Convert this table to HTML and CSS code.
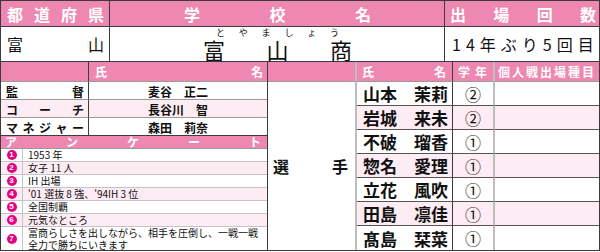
FILE: index.html
```html
<!DOCTYPE html>
<html lang="ja">
<head>
<meta charset="utf-8">
<link rel="stylesheet" href="styles.css">
</head>
<body>
<div class="sheet">
  <div class="top">
    <div class="hd jst big pref-h"><span>都</span><span>道</span><span>府</span><span>県</span></div>
    <div class="hd jst big school-h"><span>学</span><span>校</span><span>名</span></div>
    <div class="hd jst big count-h"><span>出</span><span>場</span><span>回</span><span>数</span></div>
    <div class="jst pref"><span>富</span><span>山</span></div>
    <div class="school">
      <div class="ruby jst"><span>と</span><span>や</span><span>ま</span><span>し</span><span>ょ</span><span>う</span></div>
      <div class="sname jst"><span>富</span><span>山</span><span>商</span></div>
    </div>
    <div class="count">14年ぶり5回目</div>
  </div>
  <div class="lower">
    <div class="left">
      <div class="staff">
        <div class="hd"></div>
        <div class="hd jst sh-name"><span>氏</span><span>名</span></div>
        <div class="jst role"><span>監</span><span>督</span></div>
        <div class="person">麦谷　正二</div>
        <div class="jst role alt"><span>コ</span><span>ー</span><span>チ</span></div>
        <div class="person alt">長谷川　智</div>
        <div class="jst role last"><span>マ</span><span>ネ</span><span>ジ</span><span>ャ</span><span>ー</span></div>
        <div class="person last">森田　莉奈</div>
      </div>
      <div class="hd jst survey-h"><span>ア</span><span>ン</span><span>ケ</span><span>ー</span><span>ト</span></div>
      <div class="survey">
        <div class="num"><span class="dot">1</span></div><div class="ans">1953 年</div>
        <div class="num alt"><span class="dot">2</span></div><div class="ans alt">女子 11 人</div>
        <div class="num"><span class="dot">3</span></div><div class="ans">IH 出場</div>
        <div class="num alt"><span class="dot">4</span></div><div class="ans alt">'01 選抜 8 強、'94IH 3 位</div>
        <div class="num"><span class="dot">5</span></div><div class="ans">全国制覇</div>
        <div class="num alt"><span class="dot">6</span></div><div class="ans alt">元気なところ</div>
        <div class="num end"><span class="dot">7</span></div><div class="ans end two">富商らしさを出しながら、相手を圧倒し、一戦一戦<br>全力で勝ちにいきます</div>
      </div>
    </div>
    <div class="players">
      <div class="hd ph c1"></div>
      <div class="hd ph c2 jst pn-h"><span>氏</span><span>名</span></div>
      <div class="hd ph c3 jst gr-h"><span>学</span><span>年</span></div>
      <div class="hd ph c4 jst ev-h"><span>個</span><span>人</span><span>戦</span><span>出</span><span>場</span><span>種</span><span>目</span></div>
      <div class="c1 jst senshu"><span>選</span><span>手</span></div>
      <div class="c2 pname">山本　茉莉</div><div class="c3 grade">②</div><div class="c4"></div>
      <div class="c2 pname alt">岩城　来未</div><div class="c3 grade alt">②</div><div class="c4 alt"></div>
      <div class="c2 pname">不破　瑠香</div><div class="c3 grade">①</div><div class="c4"></div>
      <div class="c2 pname alt">惣名　愛理</div><div class="c3 grade alt">①</div><div class="c4 alt"></div>
      <div class="c2 pname">立花　風吹</div><div class="c3 grade">①</div><div class="c4"></div>
      <div class="c2 pname alt">田島　凛佳</div><div class="c3 grade alt">①</div><div class="c4 alt"></div>
      <div class="c2 pname end">髙島　栞菜</div><div class="c3 grade end">①</div><div class="c4 end"></div>
    </div>
  </div>
</div>
</body>
</html>
```
FILE: styles.css
```css
* { box-sizing: border-box; margin: 0; padding: 0; }
body {
  margin: 0;
  background: #fff;
  font-family: "Noto Sans CJK JP", "Noto Sans", sans-serif;
  color: #111;
}
.sheet {
  width: 600px;
  border: 1px solid #3c3c3c;
}
.hd { background: #ee87b1; color: #fff; font-weight: bold; }
.alt { background: #fdecf3; }
.jst { display: flex; justify-content: space-between; align-items: center; }

/* top block */
.top {
  display: grid;
  grid-template-columns: 109px 335px 154px;
  grid-template-rows: 26px 35px;
}
.top > div { border-right: 1px solid #3c3c3c; border-bottom: 1px solid #3c3c3c; }
.top > div:nth-child(3n) { border-right: none; }
.big { font-size: 16px; line-height: 1; }
.pref-h { padding: 0 5px 0 6px; }
.school-h { padding: 0 73px 0 74px; }
.count-h { padding: 0 3px 0 5px; }
.pref { font-size: 16px; padding: 0 5px 0 6px; }
.school { display: flex; flex-direction: column; padding: 1px 0 0; }
.ruby { font-size: 9px; line-height: 10px; padding: 0 105px 0 106px; }
.sname { font-size: 22px; line-height: 22px; padding: 0 92px 0 93px; }
.count {
  display: flex; align-items: center; white-space: nowrap; overflow: hidden;
  font-size: 16px; letter-spacing: 5px; padding-left: 7px;
}

/* lower block */
.lower { display: flex; height: 188px; }
.left {
  width: 267px;
  border-right: 1px solid #3c3c3c;
  display: flex; flex-direction: column;
}
.staff {
  display: grid;
  grid-template-columns: 88px 178px;
  grid-template-rows: 20px repeat(3, 18px);
}
.staff > div { border-bottom: 1px solid #9a9a9a; }
.staff > div:nth-child(odd) { border-right: 1px solid #3c3c3c; }
.staff > .last { border-bottom-color: #3c3c3c; }
.sh-name { font-size: 12px; padding: 0 4px 0 6px; }
.role { font-size: 12px; font-weight: bold; padding: 2px 4px 0 5px; line-height: 1; }
.person {
  font-size: 12px; font-weight: bold; line-height: 1; padding-top: 2px;
  display: flex; align-items: center; justify-content: center;
}
.survey-h {
  height: 13px; font-size: 12px; line-height: 12px;
  padding: 0 6px 0 4px; border-bottom: 1px solid #9a9a9a;
}
.survey {
  display: grid;
  grid-template-columns: 22px 244px;
  grid-template-rows: repeat(6, 13px) 23px;
}
.survey > div { border-bottom: 1px solid #c4c4c4; }
.survey > .end { border-bottom: none; }
.num {
  border-right: 1px solid #c4c4c4;
  display: flex; align-items: center; justify-content: center;
}
.dot {
  width: 10px; height: 10px; border-radius: 50%;
  background: #e4007f; color: #fff;
  font-family: "Liberation Sans", sans-serif;
  font-size: 8px; font-weight: bold; line-height: 10px; text-align: center;
}
.ans {
  font-size: 10px; line-height: 12px; padding-left: 5px;
  display: flex; align-items: center;
}
.ans.two { display: block; line-height: 11.5px; }

.players {
  display: grid;
  grid-template-columns: 89px 96px 42px 104px;
  grid-template-rows: 20px repeat(7, 24px);
}
.players > div { border-bottom: 1px solid #555; }
.players > .ph { border-bottom-color: #9a9a9a; font-size: 12px; line-height: 1; }
.players > .end, .players > .senshu { border-bottom: none; }
.c1 { border-right: 2px solid #bdbdbd; }
.c2 { border-right: 1px solid #3c3c3c; }
.c3 { border-right: 2px solid #bdbdbd; }
.pn-h { padding: 0 6px 0 5px; }
.gr-h { padding: 0 6px 0 5px; font-size: 11px; }
.ev-h { padding: 0 5px 0 3px; }
.senshu {
  grid-column: 1; grid-row: 2 / span 7;
  font-size: 16px; font-weight: bold; padding: 0 7px 0 5px;
}
.pname {
  font-size: 17px; font-weight: bold; line-height: 1;
  display: flex; align-items: center; padding-left: 6px; white-space: nowrap;
}
.grade {
  font-size: 16px; line-height: 1;
  display: flex; align-items: center; justify-content: center;
}
```
